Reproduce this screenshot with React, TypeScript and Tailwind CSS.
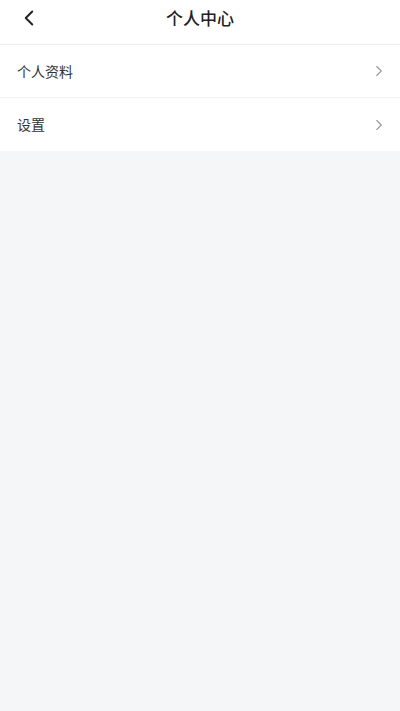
import { ChevronLeft, ChevronRight } from 'lucide-react';

const items = ['个人资料', '设置'];

const App = () => {
  return (
    <div
      className="min-h-[711px] w-full bg-[#f5f6f8]"
      style={{ fontFamily: '"Noto Sans CJK SC", "Noto Sans", sans-serif' }}
    >
      <div className="relative flex h-[45px] items-center justify-center border-b border-[#ececec] bg-white pb-[8px]">
        <button className="absolute left-[16px] top-[5px] text-[#222]">
          <ChevronLeft size={26} strokeWidth={1.8} />
        </button>
        <h1 className="text-[17px] font-medium text-[#222]">个人中心</h1>
      </div>

      <div className="bg-white">
        {items.map((item, i) => (
          <div
            key={item}
            className={
              i === 0
                ? 'flex h-[53px] items-center justify-between border-b border-[#f1f1f1] pl-[17px] pr-[12px]'
                : 'flex h-[53px] items-center justify-between pl-[17px] pr-[12px]'
            }
          >
            <span className="text-[14px] text-[#333]">{item}</span>
            <ChevronRight size={18} strokeWidth={1.5} className="text-[#999]" />
          </div>
        ))}
      </div>
    </div>
  );
};

export default App;
